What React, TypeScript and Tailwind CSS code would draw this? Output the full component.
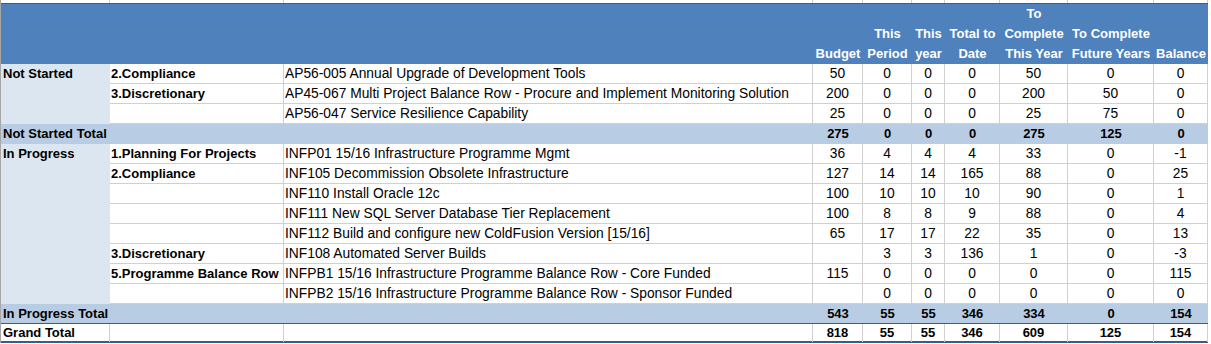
type Row = {
  status?: string;
  category?: string;
  project: string;
  values: (number | '')[];
};

type Group = {
  status: string;
  rows: Row[];
  total: number[];
};

const groups: Group[] = [
  {
    status: 'Not Started',
    rows: [
      { category: '2.Compliance', project: 'AP56-005 Annual Upgrade of Development Tools', values: [50, 0, 0, 0, 50, 0, 0] },
      { category: '3.Discretionary', project: 'AP45-067 Multi Project Balance Row - Procure and Implement Monitoring Solution', values: [200, 0, 0, 0, 200, 50, 0] },
      { project: 'AP56-047 Service Resilience Capability', values: [25, 0, 0, 0, 25, 75, 0] },
    ],
    total: [275, 0, 0, 0, 275, 125, 0],
  },
  {
    status: 'In Progress',
    rows: [
      { category: '1.Planning For Projects', project: 'INFP01 15/16 Infrastructure Programme Mgmt', values: [36, 4, 4, 4, 33, 0, -1] },
      { category: '2.Compliance', project: 'INF105 Decommission Obsolete Infrastructure', values: [127, 14, 14, 165, 88, 0, 25] },
      { project: 'INF110 Install Oracle 12c', values: [100, 10, 10, 10, 90, 0, 1] },
      { project: 'INF111 New SQL Server Database Tier Replacement', values: [100, 8, 8, 9, 88, 0, 4] },
      { project: 'INF112 Build and configure new ColdFusion Version [15/16]', values: [65, 17, 17, 22, 35, 0, 13] },
      { category: '3.Discretionary', project: 'INF108 Automated Server Builds', values: ['', 3, 3, 136, 1, 0, -3] },
      { category: '5.Programme Balance Row', project: 'INFPB1 15/16 Infrastructure Programme Balance Row - Core Funded', values: [115, 0, 0, 0, 0, 0, 115] },
      { project: 'INFPB2 15/16 Infrastructure Programme Balance Row - Sponsor Funded', values: ['', 0, 0, 0, 0, 0, 0] },
    ],
    total: [543, 55, 55, 346, 334, 0, 154],
  },
];

const grandTotal = [818, 55, 55, 346, 609, 125, 154];

// column widths: status, category, project, then the 7 figures
const GRID = 'grid grid-cols-[109px_174px_529px_50px_49px_33px_55px_68px_86px_54px]';

const headers: string[][] = [
  ['Budget'],
  ['This', 'Period'],
  ['This', 'year'],
  ['Total to', 'Date'],
  ['To', 'Complete', 'This Year'],
  ['To Complete', 'Future Years'],
  ['Balance'],
];

const cell = 'h-[20px] border-r border-b border-[#d0d0d0] leading-[20px] whitespace-nowrap';

export default function App() {
  return (
    <div className="w-[1211px] h-[344px] bg-white font-['Liberation_Sans',Arial,sans-serif] text-[13px] text-black overflow-hidden">
      <div className="w-[1208px] border-l border-[#a6a6a6]">
        {/* strip above the header */}
        <div className={`${GRID} h-[4px] border-b border-[#385d8a]`}>
          {Array.from({ length: 10 }).map((_, i) => (
            <div key={i} className="border-r border-[#d0d0d0]" />
          ))}
        </div>

        {/* header */}
        <div className={`${GRID} h-[60px] bg-[#4f81bd] text-white font-bold leading-[20px]`}>
          <div />
          <div />
          <div />
          {headers.map((lines, i) => (
            <div key={i} className="flex flex-col justify-end items-center text-center whitespace-nowrap">
              {lines.map(l => (
                <span key={l}>{l}</span>
              ))}
            </div>
          ))}
        </div>

        {groups.map(g => (
          <div key={g.status}>
            {g.rows.map((r, ri) => (
              <div key={r.project} className={GRID}>
                <div className="h-[20px] bg-[#dce6f1] pl-[2px] font-bold leading-[20px] whitespace-nowrap">
                  {ri === 0 ? g.status : ''}
                </div>
                <div className={`${cell} pl-[1px] font-bold`}>{r.category ?? ''}</div>
                <div className={`${cell} pl-[1px] text-[13.8px]`}>{r.project}</div>
                {r.values.map((v, vi) => (
                  <div key={vi} className={`${cell} text-center text-[13.8px]`}>{v}</div>
                ))}
              </div>
            ))}
            <div
              className={`${GRID} h-[20px] bg-[#b8cce4] font-bold leading-[20px] ${
                g.status === 'In Progress' ? 'border-b border-[#385d8a]' : ''
              }`}
            >
              <div className="pl-[2px] whitespace-nowrap overflow-visible">{g.status} Total</div>
              <div />
              <div />
              {g.total.map((v, vi) => (
                <div key={vi} className="text-center">{v}</div>
              ))}
            </div>
          </div>
        ))}

        {/* grand total */}
        <div className={`${GRID} h-[19px] border-b-2 border-[#385d8a] font-bold leading-[18px]`}>
          <div className="pl-[2px] border-r border-[#d0d0d0] whitespace-nowrap">Grand Total</div>
          <div className="border-r border-[#d0d0d0]" />
          <div className="border-r border-[#d0d0d0]" />
          {grandTotal.map((v, vi) => (
            <div key={vi} className="text-center border-r border-[#d0d0d0]">{v}</div>
          ))}
        </div>
      </div>
    </div>
  );
}
